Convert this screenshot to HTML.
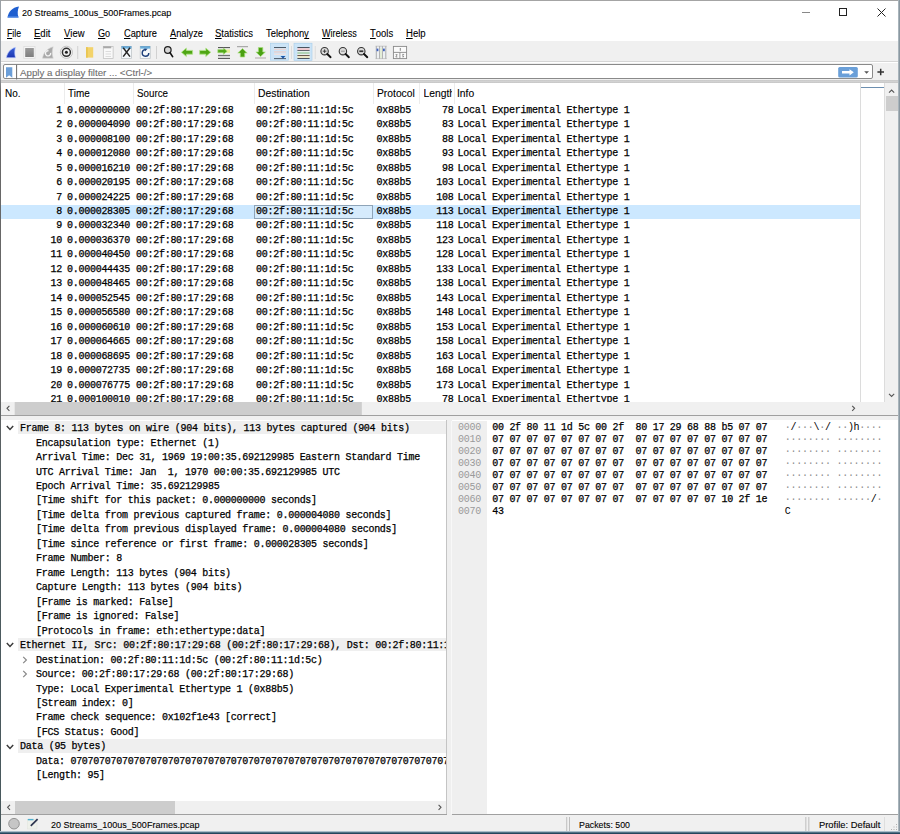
<!DOCTYPE html>
<html><head><meta charset="utf-8">
<style>
html,body{margin:0;padding:0;}
body{width:900px;height:834px;position:relative;overflow:hidden;background:#fff;font-family:"Liberation Sans",sans-serif;}
.a{position:absolute;}
.ui{font-family:"Liberation Sans",sans-serif;font-size:9.5px;color:#000;white-space:pre;line-height:1;transform-origin:0 0;-webkit-text-stroke:0.1px currentColor;}
.ui u{text-decoration:none;position:relative;}
.ui u::after{content:"";position:absolute;left:0;right:0;bottom:-0.6px;height:1px;background:#000;}
.mono{font-family:"Liberation Mono",monospace;}
/* window frame */
#bl{left:0;top:0;width:1.2px;height:834px;background:linear-gradient(#9aa0a6 0,#9aa0a6 9%,#686868 11%,#666 45%,#4f5c60 60%,#48585c 100%);}
#bt{left:0;top:0;width:900px;height:1px;background:#a4a4a4;}
#br{left:898px;top:0;width:2px;height:834px;background:linear-gradient(to right,#b8c2c8,#7b8a94);}
#bb{left:0;top:831.4px;width:900px;height:2.6px;background:linear-gradient(#dfe8ee,#6f8ea0 35%,#2a4b60 70%,#1e4058);}
/* title */
#title{left:22px;top:8px;font-size:10px;}
/* menu */
.menu{top:28.5px;font-size:9.6px;}
.menu u{text-decoration:none;border-bottom:1px solid #000;}
/* toolbar */
#tb{left:1px;top:41px;width:898px;height:21px;background:#f0f0f0;}
#tbline{left:1px;top:61.1px;width:898px;height:1px;background:#d6d6d6;}
.ic{position:absolute;top:45px;}
/* filter */
#fb{left:1px;top:62.5px;width:898px;height:20px;background:#f0f0f0;}
#fbox{left:2.5px;top:63.9px;width:870px;height:15.6px;background:#fff;border:1px solid #8a8a8a;border-radius:2px;box-sizing:border-box;}
#fbline{left:1px;top:79.5px;width:898px;height:3.7px;background:linear-gradient(#dadada,#c4c4c4 25%,#d2d2d2 50%,#c4c4c4 80%,#e6e6e6);}
/* packet list */
#pl{left:1px;top:83.2px;width:859px;height:318.4px;background:#fff;overflow:hidden;}
#plh{left:0;top:0;width:859px;height:20px;background:#fff;}
.hs{position:absolute;top:0;width:1px;height:21px;background:#ececec;}
.hd{position:absolute;top:6.5px;font-size:9.6px;color:#000;}
.pr{position:absolute;left:0;width:859px;height:14.47px;}
.pr.sel{background:#cce8ff;}
.c{position:absolute;top:2px;font-family:"Liberation Mono",monospace;font-size:10px;letter-spacing:-0.27px;white-space:pre;line-height:10px;color:#000;-webkit-text-stroke:0.25px #000;}
.no{right:798px;}
.tm{left:66px;}
.src{left:135px;}
.dst{left:255px;}
.pro{left:375.5px;}
.len{right:406.5px;}
.inf{left:456.5px;}
/* minimap + vscroll */
#mmL{left:860px;top:83.2px;width:1px;height:318.4px;background:#dcdcdc;}
#mm{left:861px;top:83.2px;width:23px;height:318.4px;background:#fff;}
#mmbar{left:861px;top:86.8px;width:23px;height:1px;background:#6d8fb0;}
#mmR{left:884px;top:83.2px;width:1px;height:318.4px;background:#dcdcdc;}
#vs{left:885px;top:83.2px;width:14px;height:318.4px;background:#f0f0f0;}
#vthumb{left:886px;top:96.2px;width:12px;height:14.4px;background:#cdcdcd;}
/* packet list hscroll */
#hs1{left:1px;top:401.6px;width:898px;height:13.4px;background:#f0f0f0;}
#split{left:1px;top:415px;width:898px;height:1px;background:#a0a0a0;}
#splitg{left:1px;top:416px;width:898px;height:3.5px;background:#f0f0f0;}
/* details */
#dt{left:1px;top:419.5px;width:445px;height:381.5px;background:#fff;overflow:hidden;}
#dtR{left:446px;top:419.5px;width:1px;height:395px;background:#c4c4c4;}
.tr{position:absolute;left:0;width:445.5px;height:14.47px;}
.tr.top .tt{background:transparent;}
.tr.top::before{content:"";position:absolute;left:17px;right:0;top:0.3px;height:13.1px;background:#efefef;}
.tt{position:absolute;top:3.3px;font-family:"Liberation Mono",monospace;font-size:10px;letter-spacing:-0.27px;white-space:pre;line-height:10px;color:#000;-webkit-text-stroke:0.25px #000;}
.chev{position:absolute;top:4.5px;}
.chevr{position:absolute;top:3.5px;}
#hs2{left:1px;top:801px;width:445px;height:13.4px;background:#f0f0f0;}
#hthumb2{left:14.8px;top:801px;width:160.3px;height:12.9px;background:#cdcdcd;}
#gap{left:447px;top:419.5px;width:5px;height:395px;background:#efefef;}
#gapl{left:451.2px;top:421px;width:0.8px;height:393px;background:#f8f8f8;}
/* hex */
#hx{left:452px;top:419.5px;width:446px;height:395px;background:#fff;overflow:hidden;}
#hxoff{left:452px;top:421px;width:34.5px;height:393px;background:#f0f0f0;}
.hr{position:absolute;left:0;height:12px;width:447px;}
.off,.hex,.asc{position:absolute;top:2px;font-family:"Liberation Mono",monospace;font-size:10px;letter-spacing:-0.27px;white-space:pre;line-height:10px;}
.off{left:6px;color:#9a9a9a;}
.hex{left:40.2px;color:#000;-webkit-text-stroke:0.25px #000;}
.asc{left:332.8px;color:#000;}
.asc i{font-style:normal;color:#8c8c8c;}
#hxbot{left:451.5px;top:814.4px;width:447px;height:1px;background:#a0a0a0;}
#dtbot{left:1px;top:814.4px;width:446px;height:1px;background:#a0a0a0;}
/* status */
#sb{left:1px;top:815.4px;width:898px;height:16.6px;background:#f0f0f0;}
</style></head><body>
<div class="a" id="bt"></div>
<!-- title bar -->
<svg class="a" style="left:7px;top:6px" width="13" height="12" viewBox="0 0 13 12"><path d="M0.5 11.5 C1.5 6 5 1.5 12 0.5 C10.5 4 10.3 8 11.5 11.5 Z" fill="#1f5fd0"/><path d="M0.5 11.5 L11.5 11.5 L11.2 10.2 L1 10.2 Z" fill="#4d86e6"/></svg>
<div class="a" style="left:802px;top:12px;width:8px;height:1px;background:#888;"></div>
<div class="a" style="left:839px;top:8px;width:8px;height:8px;border:1px solid #222;box-sizing:border-box;"></div>
<svg class="a" style="left:877px;top:8px" width="9" height="9" viewBox="0 0 9 9"><path d="M0.5 0.5 L8.5 8.5 M8.5 0.5 L0.5 8.5" stroke="#222" stroke-width="1"/></svg>
<!-- menu -->
<!-- toolbar -->
<div class="a" id="tb"></div>
<div class="a" id="tbline"></div>
<svg class="a" style="left:0;top:0" width="420" height="64" viewBox="0 0 420 64">
<defs>
<linearGradient id="gfin" x1="0" y1="0" x2="0" y2="1"><stop offset="0" stop-color="#3a62d8"/><stop offset="1" stop-color="#1b34b0"/></linearGradient>
<linearGradient id="gstop" x1="0" y1="0" x2="0" y2="1"><stop offset="0" stop-color="#9a9a9a"/><stop offset="1" stop-color="#7e7e7e"/></linearGradient>
<linearGradient id="gdoc" x1="0" y1="0" x2="0" y2="1"><stop offset="0" stop-color="#3f8fc8"/><stop offset="1" stop-color="#9fd0ee"/></linearGradient>
</defs>
<!-- 1 start capture fin -->
<path d="M6.3 57.8 C7.3 52.5 10.5 48.6 15.6 47.3 C14.6 50.5 14.5 54.5 15.6 57.8 Z" fill="url(#gfin)" stroke="#c9d4ff" stroke-width="0.7"/>
<!-- 2 stop -->
<rect x="23.8" y="46.5" width="11.2" height="11.8" fill="#f7f7f7" stroke="#dcdcdc" stroke-width="0.8"/>
<rect x="25.2" y="48" width="8.6" height="9" fill="url(#gstop)"/>
<!-- 3 restart -->
<path d="M42.5 58.2 C43.5 52.8 47 48.5 53.2 46.8 C52 50.5 51.8 54.5 53.2 58.2 Z" fill="#a9a9a9" stroke="#d5d5d5" stroke-width="0.6"/>
<path d="M48.5 50.8 A2.6 2.6 0 1 0 50.6 52.8" fill="none" stroke="#f4f4f4" stroke-width="1.3"/>
<!-- 4 options -->
<circle cx="66.4" cy="52.3" r="6.1" fill="#f2f2f2" stroke="#bdbdbd" stroke-width="0.9"/>
<circle cx="66.4" cy="52.3" r="4.0" fill="#eeeeee" stroke="#303030" stroke-width="1.5"/>
<circle cx="66.4" cy="52.3" r="1.5" fill="#1d1d1d"/>
<!-- sep -->
<rect x="77.3" y="46" width="0.9" height="13" fill="#cdcdcd"/>
<!-- 5 open folder -->
<rect x="86" y="47.2" width="7.2" height="10.4" fill="#f3d36a"/>
<rect x="86" y="47.2" width="1.8" height="10.4" fill="#e9c552"/>
<!-- 6 save (disabled) -->
<rect x="103.3" y="46.5" width="9.8" height="12" fill="#f9f9f9" stroke="#bdbdbd" stroke-width="0.7"/>
<rect x="103.3" y="46.3" width="8" height="2" fill="#a8a8a8"/>
<path d="M105.5 51.5 H111 M105.5 54 H111 M105.5 56.5 H111" stroke="#d4d4d4" stroke-width="0.8"/>
<!-- 7 close -->
<rect x="121.5" y="46.5" width="10" height="12" fill="#f4f8fb" stroke="#b9bfc4" stroke-width="0.7"/>
<rect x="121.5" y="46.3" width="10" height="2.6" fill="url(#gdoc)"/>
<path d="M123.2 56.6 L130 47.8 M123.2 47.8 L130 56.6" stroke="#262626" stroke-width="1.5"/>
<!-- 8 reload -->
<rect x="140.2" y="46.5" width="10" height="12" fill="#f4f8fb" stroke="#b9bfc4" stroke-width="0.7"/>
<rect x="140.2" y="46.3" width="10" height="2.6" fill="url(#gdoc)"/>
<path d="M145.6 49.6 A3.3 3.3 0 1 0 148.8 53" fill="none" stroke="#1c3f7a" stroke-width="1.4"/>
<path d="M144.2 48.4 L147.6 48.8 L145.2 51.2 Z" fill="#1c3f7a"/>
<!-- sep -->
<rect x="156" y="46" width="0.9" height="13" fill="#cdcdcd"/>
<!-- 9 find -->
<circle cx="167.8" cy="50" r="3.3" fill="#d6d6d6" stroke="#1e1e1e" stroke-width="1.2"/>
<path d="M170 52.6 L172.6 56.6" stroke="#111" stroke-width="1.7" stroke-linecap="round"/>
<!-- 10 back -->
<path d="M181.4 52.3 L186.4 48 L186.4 50.4 L192.6 50.4 L192.6 54.2 L186.4 54.2 L186.4 56.6 Z" fill="#4fa614" stroke="#b5e68f" stroke-width="0.8"/>
<!-- 11 forward -->
<path d="M210.8 52.3 L205.8 48 L205.8 50.4 L199.6 50.4 L199.6 54.2 L205.8 54.2 L205.8 56.6 Z" fill="#4fa614" stroke="#b5e68f" stroke-width="0.8"/>
<!-- 12 go to packet -->
<rect x="218" y="47.1" width="12" height="1" fill="#4a4a4a"/>
<rect x="218" y="55.8" width="12" height="2.2" fill="#d6d6d6"/>
<rect x="218" y="54.9" width="12" height="0.9" fill="#555"/>
<rect x="218" y="58" width="12" height="0.9" fill="#4a4a4a"/>
<rect x="224" y="49.5" width="6" height="3.3" fill="#e8ee9a"/>
<path d="M227.2 51.2 L223.4 48 L223.4 49.6 L217.8 49.6 L217.8 52.8 L223.4 52.8 L223.4 54.4 Z" fill="#52a818" stroke="#a8e07c" stroke-width="0.6"/>
<!-- 13 first -->
<rect x="237" y="46.2" width="11" height="1" fill="#9a9a9a"/>
<path d="M242.5 48.6 L247.2 53 L244.7 53 L244.7 57 L240.3 57 L240.3 53 L237.8 53 Z" fill="#4aa012" stroke="#a8e07c" stroke-width="0.7"/>
<!-- 14 last -->
<rect x="255" y="57.5" width="11" height="1" fill="#b0a8a8"/>
<path d="M260.6 56.6 L265.3 52 L262.8 52 L262.8 47.5 L258.4 47.5 L258.4 52 L255.9 52 Z" fill="#4aa012" stroke="#a8e07c" stroke-width="0.7"/>
<!-- 15 autoscroll pressed -->
<rect x="270.3" y="43.2" width="18.4" height="17" fill="#cce4f7" stroke="#a6cdec" stroke-width="0.6"/>
<rect x="274" y="47" width="12" height="0.9" fill="#3d4a57"/>
<rect x="274" y="48.6" width="12" height="1.4" fill="#e9d6d6"/>
<rect x="274" y="51.2" width="12" height="1.4" fill="#e6d2d0"/>
<rect x="274" y="53.6" width="12" height="1.4" fill="#eee2e2"/>
<rect x="274" y="58.2" width="12" height="0.9" fill="#3d4a57"/>
<path d="M280.5 56 H285.5 L283.8 57.8 L283.8 58.6 L282.2 58.6 L282.2 57.8 Z" fill="#1d58a8"/>
<!-- sep -->
<rect x="291.2" y="46" width="0.8" height="13" fill="#d8d8d8"/>
<!-- 16 colorize pressed -->
<rect x="294" y="43.2" width="18" height="17.2" fill="#cce4f7" stroke="#a6cdec" stroke-width="0.6"/>
<rect x="297.4" y="47" width="12.2" height="1" fill="#4a5560"/>
<rect x="297.4" y="48.2" width="12.2" height="1.8" fill="#f2c8cc"/>
<rect x="297.4" y="50" width="12.2" height="0.9" fill="#5a5560"/>
<rect x="297.4" y="51" width="12.2" height="1.2" fill="#e4f0ea"/>
<rect x="297.4" y="52.2" width="12.2" height="1.7" fill="#a9d0a9"/>
<rect x="297.4" y="53.9" width="12.2" height="1.1" fill="#e8ecec"/>
<rect x="297.4" y="55" width="12.2" height="1" fill="#6d5d50"/>
<rect x="297.4" y="56.1" width="12.2" height="1.8" fill="#efe6c2"/>
<rect x="297.4" y="58" width="12.2" height="1" fill="#4a5560"/>
<!-- sep -->
<rect x="314.8" y="46" width="0.8" height="13" fill="#d8d8d8"/>
<!-- 17 zoom in -->
<circle cx="324.6" cy="51.2" r="3.7" fill="#dcdcdc" stroke="#333" stroke-width="1.1"/>
<path d="M322.8 51.2 H326.4 M324.6 49.4 V53" stroke="#333" stroke-width="0.9"/>
<path d="M327.3 54 L330.6 57.2" stroke="#111" stroke-width="1.9" stroke-linecap="round"/>
<!-- 18 zoom out -->
<circle cx="342.9" cy="51.2" r="3.7" fill="#dcdcdc" stroke="#333" stroke-width="1.1"/>
<path d="M341 51.2 H344.8" stroke="#888" stroke-width="0.9"/>
<path d="M345.6 54 L348.9 57.2" stroke="#111" stroke-width="1.9" stroke-linecap="round"/>
<!-- 19 normal -->
<circle cx="361.3" cy="51.2" r="3.7" fill="#dcdcdc" stroke="#333" stroke-width="1.1"/>
<rect x="359.3" y="50.4" width="4" height="1.7" fill="#333"/>
<path d="M364 54 L367.3 57.2" stroke="#111" stroke-width="1.9" stroke-linecap="round"/>
<!-- 20 resize columns -->
<rect x="375.2" y="46.2" width="11.6" height="12.5" fill="#eef1f3"/>
<path d="M375.5 46.2 H386.8 M375.5 58.6 H386.8" stroke="#bbb" stroke-width="0.7"/>
<path d="M376.3 46.2 V58.7 M379.6 46.2 V58.7 M382.4 46.2 V58.7 M385.8 46.2 V58.7" stroke="#9a9a9a" stroke-width="0.8"/>
<rect x="376.6" y="48.6" width="1.8" height="2.6" fill="#3f62c0"/>
<rect x="383" y="48.6" width="1.8" height="2.6" fill="#3f62c0"/>
<rect x="380" y="48" width="2" height="10" fill="#e3edd8"/>
<!-- 21 layout -->
<rect x="393.4" y="46.4" width="13.2" height="12.2" fill="#fbfbfb" stroke="#8a8a8a" stroke-width="0.9"/>
<path d="M393.4 52.4 H406.6 M399.9 52.4 V58.6" stroke="#8a8a8a" stroke-width="0.9"/>
<path d="M400.3 48 V50.8" stroke="#555" stroke-width="0.7"/>
<path d="M395.6 54.6 H397.2 L395.8 57 H397.4" fill="none" stroke="#555" stroke-width="0.6"/>
<path d="M402.2 54.4 H403.8 L402.8 55.6 L403.8 56.8 H402.2" fill="none" stroke="#555" stroke-width="0.6"/>
</svg>

<!-- filter -->
<div class="a" id="fb"></div>
<div class="a" id="fbox"></div>
<div class="a" id="fbline"></div>
<svg class="a" style="left:0;top:60px" width="900" height="26" viewBox="0 60 900 26">
<path d="M6 67.3 H12.3 V77.7 L9.15 75.2 L6 77.7 Z" fill="#6b9ed8"/>
<rect x="16.1" y="64.8" width="1" height="14.6" fill="#6a6a6a"/>
<rect x="838.2" y="67.1" width="19.6" height="10.4" rx="1.5" fill="#6a9fd8"/>
<path d="M842 71 H849.5 V69.2 L853.8 72.3 L849.5 75.4 V73.6 H842 Z" fill="#fff"/>
<path d="M864.2 71.2 H869 L866.6 73.8 Z" fill="#555"/>
<path d="M877.4 72 H884 M880.7 68.7 V75.3" stroke="#333" stroke-width="1.5"/>
</svg>

<!-- packet list -->
<div class="a" id="pl">
<div class="a" id="plh">
<div class="hs" style="left:63.3px"></div>
<div class="hs" style="left:131.9px"></div>
<div class="hs" style="left:252.5px"></div>
<div class="hs" style="left:372.3px"></div>
<div class="hs" style="left:418.4px"></div>
<div class="hs" style="left:453.4px"></div>
</div>
<div class="pr" style="top:20.50px"><span class="c no">1</span><span class="c tm">0.000000000</span><span class="c src">00:2f:80:17:29:68</span><span class="c dst">00:2f:80:11:1d:5c</span><span class="c pro">0x88b5</span><span class="c len">78</span><span class="c inf">Local Experimental Ethertype 1</span></div>
<div class="pr" style="top:34.97px"><span class="c no">2</span><span class="c tm">0.000004090</span><span class="c src">00:2f:80:17:29:68</span><span class="c dst">00:2f:80:11:1d:5c</span><span class="c pro">0x88b5</span><span class="c len">83</span><span class="c inf">Local Experimental Ethertype 1</span></div>
<div class="pr" style="top:49.44px"><span class="c no">3</span><span class="c tm">0.000008100</span><span class="c src">00:2f:80:17:29:68</span><span class="c dst">00:2f:80:11:1d:5c</span><span class="c pro">0x88b5</span><span class="c len">88</span><span class="c inf">Local Experimental Ethertype 1</span></div>
<div class="pr" style="top:63.91px"><span class="c no">4</span><span class="c tm">0.000012080</span><span class="c src">00:2f:80:17:29:68</span><span class="c dst">00:2f:80:11:1d:5c</span><span class="c pro">0x88b5</span><span class="c len">93</span><span class="c inf">Local Experimental Ethertype 1</span></div>
<div class="pr" style="top:78.38px"><span class="c no">5</span><span class="c tm">0.000016210</span><span class="c src">00:2f:80:17:29:68</span><span class="c dst">00:2f:80:11:1d:5c</span><span class="c pro">0x88b5</span><span class="c len">98</span><span class="c inf">Local Experimental Ethertype 1</span></div>
<div class="pr" style="top:92.85px"><span class="c no">6</span><span class="c tm">0.000020195</span><span class="c src">00:2f:80:17:29:68</span><span class="c dst">00:2f:80:11:1d:5c</span><span class="c pro">0x88b5</span><span class="c len">103</span><span class="c inf">Local Experimental Ethertype 1</span></div>
<div class="pr" style="top:107.32px"><span class="c no">7</span><span class="c tm">0.000024225</span><span class="c src">00:2f:80:17:29:68</span><span class="c dst">00:2f:80:11:1d:5c</span><span class="c pro">0x88b5</span><span class="c len">108</span><span class="c inf">Local Experimental Ethertype 1</span></div>
<div class="pr sel" style="top:121.79px"><div style="position:absolute;left:253.3px;top:0.2px;width:119px;height:14px;box-sizing:border-box;border:1px solid #8ea4b8;background:#d6ebfc"></div><span class="c no">8</span><span class="c tm">0.000028305</span><span class="c src">00:2f:80:17:29:68</span><span class="c dst">00:2f:80:11:1d:5c</span><span class="c pro">0x88b5</span><span class="c len">113</span><span class="c inf">Local Experimental Ethertype 1</span></div>
<div class="pr" style="top:136.26px"><span class="c no">9</span><span class="c tm">0.000032340</span><span class="c src">00:2f:80:17:29:68</span><span class="c dst">00:2f:80:11:1d:5c</span><span class="c pro">0x88b5</span><span class="c len">118</span><span class="c inf">Local Experimental Ethertype 1</span></div>
<div class="pr" style="top:150.73px"><span class="c no">10</span><span class="c tm">0.000036370</span><span class="c src">00:2f:80:17:29:68</span><span class="c dst">00:2f:80:11:1d:5c</span><span class="c pro">0x88b5</span><span class="c len">123</span><span class="c inf">Local Experimental Ethertype 1</span></div>
<div class="pr" style="top:165.20px"><span class="c no">11</span><span class="c tm">0.000040450</span><span class="c src">00:2f:80:17:29:68</span><span class="c dst">00:2f:80:11:1d:5c</span><span class="c pro">0x88b5</span><span class="c len">128</span><span class="c inf">Local Experimental Ethertype 1</span></div>
<div class="pr" style="top:179.67px"><span class="c no">12</span><span class="c tm">0.000044435</span><span class="c src">00:2f:80:17:29:68</span><span class="c dst">00:2f:80:11:1d:5c</span><span class="c pro">0x88b5</span><span class="c len">133</span><span class="c inf">Local Experimental Ethertype 1</span></div>
<div class="pr" style="top:194.14px"><span class="c no">13</span><span class="c tm">0.000048465</span><span class="c src">00:2f:80:17:29:68</span><span class="c dst">00:2f:80:11:1d:5c</span><span class="c pro">0x88b5</span><span class="c len">138</span><span class="c inf">Local Experimental Ethertype 1</span></div>
<div class="pr" style="top:208.61px"><span class="c no">14</span><span class="c tm">0.000052545</span><span class="c src">00:2f:80:17:29:68</span><span class="c dst">00:2f:80:11:1d:5c</span><span class="c pro">0x88b5</span><span class="c len">143</span><span class="c inf">Local Experimental Ethertype 1</span></div>
<div class="pr" style="top:223.08px"><span class="c no">15</span><span class="c tm">0.000056580</span><span class="c src">00:2f:80:17:29:68</span><span class="c dst">00:2f:80:11:1d:5c</span><span class="c pro">0x88b5</span><span class="c len">148</span><span class="c inf">Local Experimental Ethertype 1</span></div>
<div class="pr" style="top:237.55px"><span class="c no">16</span><span class="c tm">0.000060610</span><span class="c src">00:2f:80:17:29:68</span><span class="c dst">00:2f:80:11:1d:5c</span><span class="c pro">0x88b5</span><span class="c len">153</span><span class="c inf">Local Experimental Ethertype 1</span></div>
<div class="pr" style="top:252.02px"><span class="c no">17</span><span class="c tm">0.000064665</span><span class="c src">00:2f:80:17:29:68</span><span class="c dst">00:2f:80:11:1d:5c</span><span class="c pro">0x88b5</span><span class="c len">158</span><span class="c inf">Local Experimental Ethertype 1</span></div>
<div class="pr" style="top:266.49px"><span class="c no">18</span><span class="c tm">0.000068695</span><span class="c src">00:2f:80:17:29:68</span><span class="c dst">00:2f:80:11:1d:5c</span><span class="c pro">0x88b5</span><span class="c len">163</span><span class="c inf">Local Experimental Ethertype 1</span></div>
<div class="pr" style="top:280.96px"><span class="c no">19</span><span class="c tm">0.000072735</span><span class="c src">00:2f:80:17:29:68</span><span class="c dst">00:2f:80:11:1d:5c</span><span class="c pro">0x88b5</span><span class="c len">168</span><span class="c inf">Local Experimental Ethertype 1</span></div>
<div class="pr" style="top:295.43px"><span class="c no">20</span><span class="c tm">0.000076775</span><span class="c src">00:2f:80:17:29:68</span><span class="c dst">00:2f:80:11:1d:5c</span><span class="c pro">0x88b5</span><span class="c len">173</span><span class="c inf">Local Experimental Ethertype 1</span></div>
<div class="pr" style="top:309.90px"><span class="c no">21</span><span class="c tm">0.000100010</span><span class="c src">00:2f:80:17:29:68</span><span class="c dst">00:2f:80:11:1d:5c</span><span class="c pro">0x88b5</span><span class="c len">78</span><span class="c inf">Local Experimental Ethertype 1</span></div>
</div>
<div class="a" id="mmL"></div>
<div class="a" id="mm"></div>
<div class="a" id="mmbar"></div>
<div class="a" id="mmR"></div>
<div class="a" id="vs"></div>
<div class="a" id="vthumb"></div>
<svg class="a" style="left:880px;top:84px" width="20" height="320" viewBox="880 84 20 320">
<path d="M889 92.6 L891.6 90 L894.2 92.6" fill="none" stroke="#555" stroke-width="1.1"/>
<path d="M889 393.8 L891.6 396.4 L894.2 393.8" fill="none" stroke="#555" stroke-width="1.1"/>
</svg>

<div class="a" id="hs1"></div>
<svg class="a" style="left:0;top:400px" width="900" height="16" viewBox="0 400 900 16">
<path d="M9.4 405.8 L7 408.3 L9.4 410.8" fill="none" stroke="#555" stroke-width="1.1"/>
<rect x="14.7" y="402" width="347.1" height="13" fill="#cdcdcd"/>
<path d="M852.2 405.8 L854.6 408.3 L852.2 410.8" fill="none" stroke="#555" stroke-width="1.1"/>
</svg>

<div class="a" id="split"></div>
<div class="a" id="splitg"></div>
<!-- details -->
<div class="a" id="dt">
<div class="tr top" style="top:1.30px"><svg class="chev" style="left:4.8px" width="8" height="6" viewBox="0 0 8 6"><path d="M0.8 1.1 L4 4.4 L7.2 1.1" fill="none" stroke="#3a3a3a" stroke-width="1.5"/></svg><span class="tt" style="left:19.0px">Frame 8: 113 bytes on wire (904 bits), 113 bytes captured (904 bits)</span></div>
<div class="tr" style="top:15.77px"><span class="tt" style="left:35.0px">Encapsulation type: Ethernet (1)</span></div>
<div class="tr" style="top:30.24px"><span class="tt" style="left:35.0px">Arrival Time: Dec 31, 1969 19:00:35.692129985 Eastern Standard Time</span></div>
<div class="tr" style="top:44.71px"><span class="tt" style="left:35.0px">UTC Arrival Time: Jan  1, 1970 00:00:35.692129985 UTC</span></div>
<div class="tr" style="top:59.18px"><span class="tt" style="left:35.0px">Epoch Arrival Time: 35.692129985</span></div>
<div class="tr" style="top:73.65px"><span class="tt" style="left:35.0px">[Time shift for this packet: 0.000000000 seconds]</span></div>
<div class="tr" style="top:88.12px"><span class="tt" style="left:35.0px">[Time delta from previous captured frame: 0.000004080 seconds]</span></div>
<div class="tr" style="top:102.59px"><span class="tt" style="left:35.0px">[Time delta from previous displayed frame: 0.000004080 seconds]</span></div>
<div class="tr" style="top:117.06px"><span class="tt" style="left:35.0px">[Time since reference or first frame: 0.000028305 seconds]</span></div>
<div class="tr" style="top:131.53px"><span class="tt" style="left:35.0px">Frame Number: 8</span></div>
<div class="tr" style="top:146.00px"><span class="tt" style="left:35.0px">Frame Length: 113 bytes (904 bits)</span></div>
<div class="tr" style="top:160.47px"><span class="tt" style="left:35.0px">Capture Length: 113 bytes (904 bits)</span></div>
<div class="tr" style="top:174.94px"><span class="tt" style="left:35.0px">[Frame is marked: False]</span></div>
<div class="tr" style="top:189.41px"><span class="tt" style="left:35.0px">[Frame is ignored: False]</span></div>
<div class="tr" style="top:203.88px"><span class="tt" style="left:35.0px">[Protocols in frame: eth:ethertype:data]</span></div>
<div class="tr top" style="top:218.35px"><svg class="chev" style="left:4.8px" width="8" height="6" viewBox="0 0 8 6"><path d="M0.8 1.1 L4 4.4 L7.2 1.1" fill="none" stroke="#3a3a3a" stroke-width="1.5"/></svg><span class="tt" style="left:19.0px">Ethernet II, Src: 00:2f:80:17:29:68 (00:2f:80:17:29:68), Dst: 00:2f:80:11:1d:5c (00:2f:80:11:1d:5c)</span></div>
<div class="tr" style="top:232.82px"><svg class="chevr" style="left:21px" width="6" height="8" viewBox="0 0 6 8"><path d="M1.2 0.8 L4.4 4 L1.2 7.2" fill="none" stroke="#888" stroke-width="1.2"/></svg><span class="tt" style="left:35.0px">Destination: 00:2f:80:11:1d:5c (00:2f:80:11:1d:5c)</span></div>
<div class="tr" style="top:247.29px"><svg class="chevr" style="left:21px" width="6" height="8" viewBox="0 0 6 8"><path d="M1.2 0.8 L4.4 4 L1.2 7.2" fill="none" stroke="#888" stroke-width="1.2"/></svg><span class="tt" style="left:35.0px">Source: 00:2f:80:17:29:68 (00:2f:80:17:29:68)</span></div>
<div class="tr" style="top:261.76px"><span class="tt" style="left:35.0px">Type: Local Experimental Ethertype 1 (0x88b5)</span></div>
<div class="tr" style="top:276.23px"><span class="tt" style="left:35.0px">[Stream index: 0]</span></div>
<div class="tr" style="top:290.70px"><span class="tt" style="left:35.0px">Frame check sequence: 0x102f1e43 [correct]</span></div>
<div class="tr" style="top:305.17px"><span class="tt" style="left:35.0px">[FCS Status: Good]</span></div>
<div class="tr top" style="top:319.64px"><svg class="chev" style="left:4.8px" width="8" height="6" viewBox="0 0 8 6"><path d="M0.8 1.1 L4 4.4 L7.2 1.1" fill="none" stroke="#3a3a3a" stroke-width="1.5"/></svg><span class="tt" style="left:19.0px">Data (95 bytes)</span></div>
<div class="tr" style="top:334.11px"><span class="tt" style="left:35.0px">Data<span>:</span> 0707070707070707070707070707070707070707070707070707070707070707070707070707070707070707070707070707070707070707070707070707070707070707070707070707070707070707070707070707070707070707070707</span></div>
<div class="tr" style="top:348.58px"><span class="tt" style="left:35.0px">[Length: 95]</span></div>
</div>
<div class="a" id="hs2"></div>
<div class="a" id="hthumb2"></div>
<svg class="a" style="left:0;top:800px" width="460" height="16" viewBox="0 800 460 16">
<path d="M10 804.8 L7.6 807.3 L10 809.8" fill="none" stroke="#555" stroke-width="1.1"/>
<path d="M438.6 804.8 L441 807.3 L438.6 809.8" fill="none" stroke="#555" stroke-width="1.1"/>
</svg>

<div class="a" id="dtR"></div>
<div class="a" id="gap"></div>
<div class="a" id="gapl"></div>
<div class="a" id="hx">
<div class="a" style="left:0;top:1.5px;width:34.5px;height:393px;background:#efefef;"></div>
<div class="hr" style="top:1.70px"><span class="off">0000</span><span class="hex">00 2f 80 11 1d 5c 00 2f  80 17 29 68 88 b5 07 07</span><span class="asc"><i>·</i>/<i>·</i><i>·</i><i>·</i>\<i>·</i>/ <i>·</i><i>·</i>)h<i>·</i><i>·</i><i>·</i><i>·</i></span></div>
<div class="hr" style="top:13.70px"><span class="off">0010</span><span class="hex">07 07 07 07 07 07 07 07  07 07 07 07 07 07 07 07</span><span class="asc"><i>·</i><i>·</i><i>·</i><i>·</i><i>·</i><i>·</i><i>·</i><i>·</i> <i>·</i><i>·</i><i>·</i><i>·</i><i>·</i><i>·</i><i>·</i><i>·</i></span></div>
<div class="hr" style="top:25.70px"><span class="off">0020</span><span class="hex">07 07 07 07 07 07 07 07  07 07 07 07 07 07 07 07</span><span class="asc"><i>·</i><i>·</i><i>·</i><i>·</i><i>·</i><i>·</i><i>·</i><i>·</i> <i>·</i><i>·</i><i>·</i><i>·</i><i>·</i><i>·</i><i>·</i><i>·</i></span></div>
<div class="hr" style="top:37.70px"><span class="off">0030</span><span class="hex">07 07 07 07 07 07 07 07  07 07 07 07 07 07 07 07</span><span class="asc"><i>·</i><i>·</i><i>·</i><i>·</i><i>·</i><i>·</i><i>·</i><i>·</i> <i>·</i><i>·</i><i>·</i><i>·</i><i>·</i><i>·</i><i>·</i><i>·</i></span></div>
<div class="hr" style="top:49.70px"><span class="off">0040</span><span class="hex">07 07 07 07 07 07 07 07  07 07 07 07 07 07 07 07</span><span class="asc"><i>·</i><i>·</i><i>·</i><i>·</i><i>·</i><i>·</i><i>·</i><i>·</i> <i>·</i><i>·</i><i>·</i><i>·</i><i>·</i><i>·</i><i>·</i><i>·</i></span></div>
<div class="hr" style="top:61.70px"><span class="off">0050</span><span class="hex">07 07 07 07 07 07 07 07  07 07 07 07 07 07 07 07</span><span class="asc"><i>·</i><i>·</i><i>·</i><i>·</i><i>·</i><i>·</i><i>·</i><i>·</i> <i>·</i><i>·</i><i>·</i><i>·</i><i>·</i><i>·</i><i>·</i><i>·</i></span></div>
<div class="hr" style="top:73.70px"><span class="off">0060</span><span class="hex">07 07 07 07 07 07 07 07  07 07 07 07 07 10 2f 1e</span><span class="asc"><i>·</i><i>·</i><i>·</i><i>·</i><i>·</i><i>·</i><i>·</i><i>·</i> <i>·</i><i>·</i><i>·</i><i>·</i><i>·</i><i>·</i>/<i>·</i></span></div>
<div class="hr" style="top:85.70px"><span class="off">0070</span><span class="hex">43</span><span class="asc">C</span></div>
</div>
<div class="a" id="dtbot"></div>
<div class="a" id="hxbot"></div>
<!-- status -->
<div class="a" id="sb"></div>
<div class="a ui" style="left:22.00px;top:7.70px;font-size:9.8px;color:#000;transform:scaleX(0.9268)">20 Streams_100us_500Frames.pcap</div>
<div class="a ui" style="left:7.30px;top:28.54px;font-size:10px;color:#000;transform:scaleX(0.8682)"><u>F</u>ile</div>
<div class="a ui" style="left:34.20px;top:28.54px;font-size:10px;color:#000;transform:scaleX(0.9516)"><u>E</u>dit</div>
<div class="a ui" style="left:64.00px;top:28.54px;font-size:10px;color:#000;transform:scaleX(0.9435)"><u>V</u>iew</div>
<div class="a ui" style="left:97.80px;top:28.54px;font-size:10px;color:#000;transform:scaleX(0.9143)"><u>G</u>o</div>
<div class="a ui" style="left:123.50px;top:28.54px;font-size:10px;color:#000;transform:scaleX(0.9271)"><u>C</u>apture</div>
<div class="a ui" style="left:170.00px;top:28.54px;font-size:10px;color:#000;transform:scaleX(0.9275)"><u>A</u>nalyze</div>
<div class="a ui" style="left:214.90px;top:28.54px;font-size:10px;color:#000;transform:scaleX(0.9471)"><u>S</u>tatistics</div>
<div class="a ui" style="left:266.20px;top:28.54px;font-size:10px;color:#000;transform:scaleX(0.9387)">Telephon<u>y</u></div>
<div class="a ui" style="left:322.00px;top:28.54px;font-size:10px;color:#000;transform:scaleX(0.9046)"><u>W</u>ireless</div>
<div class="a ui" style="left:370.10px;top:28.54px;font-size:10px;color:#000;transform:scaleX(0.9461)"><u>T</u>ools</div>
<div class="a ui" style="left:405.60px;top:28.54px;font-size:10px;color:#000;transform:scaleX(0.9517)"><u>H</u>elp</div>
<div class="a ui" style="left:20.30px;top:67.60px;font-size:9.8px;color:#6e6e6e;transform:scaleX(0.9910)">Apply a display filter ... &lt;Ctrl-/&gt;</div>
<div class="a ui" style="left:5.00px;top:89.28px;font-size:10.3px;color:#000;transform:scaleX(0.9669)">No.</div>
<div class="a ui" style="left:68.30px;top:89.28px;font-size:10.3px;color:#000;transform:scaleX(0.9644)">Time</div>
<div class="a ui" style="left:136.50px;top:89.28px;font-size:10.3px;color:#000;transform:scaleX(0.9497)">Source</div>
<div class="a ui" style="left:257.50px;top:89.28px;font-size:10.3px;color:#000;transform:scaleX(1.0036)">Destination</div>
<div class="a ui" style="left:377.00px;top:89.28px;font-size:10.3px;color:#000;transform:scaleX(1.0000)">Protocol</div>
<div class="a ui" style="left:423.50px;top:89.28px;font-size:10.3px;color:#000;transform:scaleX(1.0000);width:28px;overflow:hidden">Length</div>
<div class="a ui" style="left:457.00px;top:89.28px;font-size:10.3px;color:#000;transform:scaleX(1.0000)">Info</div>
<div class="a ui" style="left:50.90px;top:819.60px;font-size:9.8px;color:#000;transform:scaleX(0.9218)">20 Streams_100us_500Frames.pcap</div>
<div class="a ui" style="left:579.00px;top:819.60px;font-size:9.8px;color:#000;transform:scaleX(0.9004)">Packets: 500</div>
<div class="a ui" style="left:818.70px;top:819.70px;font-size:9.8px;color:#000;transform:scaleX(0.9539)">Profile: Default</div>
<svg class="a" style="left:0;top:814px" width="900" height="20" viewBox="0 814 900 20">
<circle cx="14" cy="823.7" r="5.3" fill="#c6c6c6" stroke="#8c8c8c" stroke-width="0.9"/>
<rect x="27.5" y="819.5" width="9.5" height="9.5" fill="#eef0ea" stroke="#dfe3dc" stroke-width="0.5"/>
<path d="M27.8 819.6 H33.5" stroke="#4fb0cf" stroke-width="1.4"/>
<path d="M30.8 825.8 L37.6 819.2" stroke="#2d3550" stroke-width="1.7"/>
<rect x="566.3" y="817" width="0.9" height="14" fill="#b8b8b8"/>
<rect x="569" y="817" width="0.9" height="14" fill="#b8b8b8"/>
<rect x="805.4" y="817" width="0.9" height="14" fill="#b8b8b8"/>
<rect x="808.4" y="817" width="0.9" height="14" fill="#b8b8b8"/>
<rect x="884" y="817" width="0.8" height="14" fill="#dadada"/>
<g fill="#b0b0b0"><rect x="896" y="824" width="1" height="1"/><rect x="893.5" y="826.5" width="1" height="1"/><rect x="896" y="826.5" width="1" height="1"/><rect x="891" y="829" width="1" height="1"/><rect x="893.5" y="829" width="1" height="1"/><rect x="896" y="829" width="1" height="1"/></g>
</svg>

<div class="a" id="bl"></div>
<div class="a" id="br"></div>
<div class="a" id="bb"></div>
</body></html>
